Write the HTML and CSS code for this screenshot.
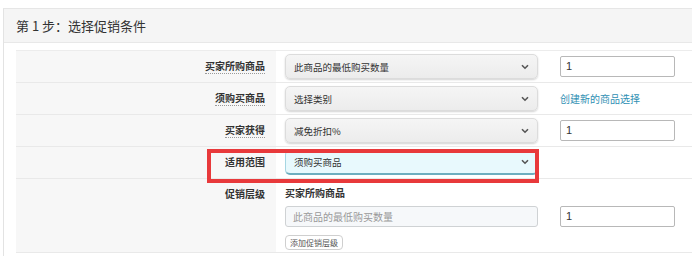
FILE: index.html
```html
<!DOCTYPE html>
<html lang="zh-CN">
<head>
<meta charset="utf-8">
<title>选择促销条件</title>
<link rel="stylesheet" href="styles.css">
</head>
<body>
<div class="panel">
  <div class="panel-head">第 1 步：选择促销条件</div>
  <div class="panel-body">
    <div class="form">
      <div class="row">
        <div class="label"><span class="lbl dotted">买家所购商品</span></div>
        <div class="cell">
          <div class="select"><span>此商品的最低购买数量</span><svg class="chev" width="8" height="6" viewBox="0 0 8 6"><path d="M1 1.2 L4 4.2 L7 1.2" fill="none" stroke="#555" stroke-width="1.6"/></svg></div>
          <div class="input">1</div>
        </div>
      </div>
      <div class="row">
        <div class="label"><span class="lbl dotted">须购买商品</span></div>
        <div class="cell">
          <div class="select"><span>选择类别</span><svg class="chev" width="8" height="6" viewBox="0 0 8 6"><path d="M1 1.2 L4 4.2 L7 1.2" fill="none" stroke="#555" stroke-width="1.6"/></svg></div>
          <a class="link" href="#">创建新的商品选择</a>
        </div>
      </div>
      <div class="row">
        <div class="label"><span class="lbl dotted">买家获得</span></div>
        <div class="cell">
          <div class="select"><span>减免折扣%</span><svg class="chev" width="8" height="6" viewBox="0 0 8 6"><path d="M1 1.2 L4 4.2 L7 1.2" fill="none" stroke="#555" stroke-width="1.6"/></svg></div>
          <div class="input">1</div>
        </div>
      </div>
      <div class="row row-scope">
        <div class="label"><span class="lbl">适用范围</span></div>
        <div class="cell">
          <div class="select select-focus"><span>须购买商品</span><svg class="chev" width="8" height="6" viewBox="0 0 8 6"><path d="M1 1.2 L4 4.2 L7 1.2" fill="none" stroke="#555" stroke-width="1.6"/></svg></div>
        </div>
        <div class="highlight"></div>
      </div>
      <div class="row row-tier">
        <div class="label"><span class="lbl">促销层级</span></div>
        <div class="cell cell-tier">
          <div class="tier-title">买家所购商品</div>
          <div class="tier-fields">
            <div class="input input-wide input-disabled">此商品的最低购买数量</div>
            <div class="input">1</div>
          </div>
          <div class="btn">添加促销层级</div>
        </div>
      </div>
    </div>
  </div>
</div>
</body>
</html>
```

FILE: styles.css
```css
* { box-sizing: border-box; }
html, body { margin: 0; padding: 0; background: #fff; }
body {
  font-family: "Noto Sans CJK SC", "Liberation Sans", sans-serif;
  color: #333;
  overflow: hidden;
}
.panel {
  margin: 8px 0 0 3px;
  border-top: 1px solid #e6e6e6;
  border-left: 1px solid #e3e3e3;
  height: 248px;
}
.panel-head {
  height: 34px;
  background: #f5f5f5;
  border-bottom: 1px solid #e8e8e8;
  padding-left: 12px;
  font-size: 13px;
  line-height: 33px;
  color: #333;
}
.panel-body {
  padding: 7px 0 0 12px;
}
.form {
  border-top: 1px solid #ececec;
}
.row {
  position: relative;
  display: grid;
  grid-template-columns: 260px 1fr;
  height: 32px;
  border-bottom: 1px solid #e9e9e9;
}
.label {
  background: #f7f7f7;
  text-align: right;
  padding: 8px 11px 0 0;
  font-size: 10px;
  line-height: 14px;
  font-weight: bold;
  color: #333;
}
.lbl.dotted {
  border-bottom: 1px dotted #9a9a9a;
}
.cell {
  display: flex;
  align-items: center;
  gap: 22px;
  padding-left: 9px;
}
.select {
  position: relative;
  width: 253px;
  height: 25px;
  border: 1px solid #dcdcdc;
  border-radius: 5px;
  background: linear-gradient(#f5f5f5, #ececec);
  box-shadow: 0 1px 2px rgba(0, 0, 0, 0.18);
  display: flex;
  align-items: center;
  justify-content: space-between;
  padding: 0 8px 0 8px;
  font-size: 9.5px;
  color: #333;
}
.select-focus {
  background: #e8f9fd;
  border: 1px solid #a6d6e2;
  border-bottom: 2px solid #6daebf;
  box-shadow: none;
}
.chev { display: block; }
.input {
  width: 115px;
  height: 21px;
  border: 1px solid #b8b8b8;
  border-radius: 2px;
  background: #fff;
  padding-left: 5px;
  font-size: 11px;
  line-height: 19px;
  color: #333;
  font-family: "Liberation Sans", "Noto Sans CJK SC", sans-serif;
}
.link {
  font-size: 10px;
  color: #2f8fb3;
  text-decoration: none;
}
.highlight {
  position: absolute;
  left: 191px;
  top: 2px;
  width: 332px;
  height: 34px;
  border: 4px solid #e8393b;
  z-index: 2;
}
.row-tier {
  height: 74px;
}
.cell-tier {
  flex-direction: column;
  align-items: flex-start;
  gap: 0;
  padding-top: 7px;
}
.tier-title {
  font-size: 10px;
  line-height: 14px;
  font-weight: bold;
  color: #333;
}
.tier-fields {
  display: flex;
  gap: 22px;
  margin-top: 6px;
}
.input-wide {
  width: 253px;
}
.input-disabled {
  background: #f6f8fa;
  border-color: #cfd2d4;
  border-radius: 3px;
  color: #999;
  padding-left: 7px;
  font-size: 10px;
  font-family: "Noto Sans CJK SC", "Liberation Sans", sans-serif;
}
.btn {
  margin-top: 8px;
  height: 15px;
  padding: 0 4px;
  border: 1px solid #cfcfcf;
  border-radius: 4px;
  background: #fff;
  font-size: 8px;
  line-height: 13px;
  color: #555;
}
```
